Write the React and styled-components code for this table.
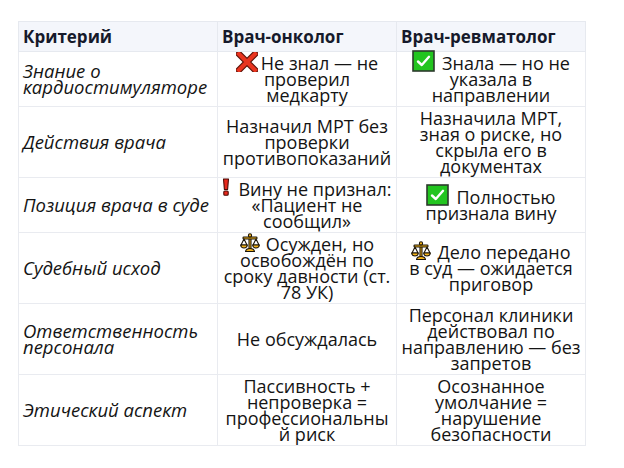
import React from 'react';
import styled, { createGlobalStyle } from 'styled-components';

const GlobalStyle = createGlobalStyle`
  html, body {
    margin: 0;
    background: #ffffff;
  }
  body {
    font-family: 'Open Sans', 'Noto Sans', 'Liberation Sans', sans-serif;
    color: #141414;
  }
`;

const Page = styled.div`
  padding: 21px 0 0 18px;
`;

const Table = styled.table`
  width: 567px;
  table-layout: fixed;
  border-collapse: collapse;
  font-size: 18px;
  line-height: 16px;
`;

const HeadCell = styled.th`
  background: #f4f6fb;
  border: 1px solid #e6e9ef;
  padding: 7px 4px 6px;
  text-align: left;
  font-size: 17px;
  font-weight: 700;
  color: #161a2b;
  white-space: nowrap;
`;

const LabelCell = styled.td`
  border: 1px solid #e9ebf0;
  padding: 3px 4px;
  vertical-align: middle;
  font-style: italic;
  font-size: 18.5px;
  text-align: left;
  white-space: nowrap;
`;

const ValueCell = styled.td`
  border: 1px solid #e9ebf0;
  padding: 3px 2px;
  vertical-align: middle;
  text-align: center;
  white-space: nowrap;
`;

const Icon = styled.svg`
  display: inline-block;
  vertical-align: top;
  margin: ${({ $up }) => `-${$up}px`} ${({ $gap }) => $gap}px -4px 0;
`;

const CrossIcon = () => (
  <Icon width="22" height="20" viewBox="0 0 22 20" $up={3} $gap={3}>
    <g strokeLinecap="square">
      <path d="M3 2 L19 18 M19 2 L3 18" stroke="#5a1208" strokeWidth="6.4" />
      <path d="M3 2 L19 18 M19 2 L3 18" stroke="#e8341f" strokeWidth="4.2" />
    </g>
  </Icon>
);

const CheckIcon = () => (
  <Icon width="23" height="22" viewBox="0 0 23 22" $up={5} $gap={7}>
    <rect x="1" y="1" width="21" height="20" fill="#22c51f" stroke="#2c3a2c" strokeWidth="1.6" />
    <path d="M6 11.5 L9.8 15 L17 6.8" fill="none" stroke="#ffffff" strokeWidth="2.4" strokeLinecap="round" strokeLinejoin="round" />
  </Icon>
);

const BangIcon = () => (
  <Icon width="8" height="18" viewBox="0 0 8 18" $up={3} $gap={8}>
    <path d="M1.5 1 H6.5 L5.6 11.5 H2.4 Z" fill="#e8281c" stroke="#4a0c06" strokeWidth="1.1" strokeLinejoin="round" />
    <rect x="1.8" y="13" width="4.4" height="4.2" rx="1" fill="#e8281c" stroke="#4a0c06" strokeWidth="1.1" />
  </Icon>
);

const ScalesIcon = () => (
  <Icon width="20" height="20" viewBox="0 0 20 20" $up={3} $gap={6}>
    <g stroke="#1b1408" strokeWidth="1.1" strokeLinejoin="round" fill="#f4b41a">
      <rect x="9" y="2.5" width="2" height="13" />
      <rect x="3" y="4" width="14" height="2" rx="0.8" />
      <circle cx="10" cy="2.4" r="1.6" />
      <path d="M4 6 L1 12 H7 Z" fill="none" />
      <path d="M16 6 L13 12 H19 Z" fill="none" />
      <path d="M0.6 12 H7.4 Q7 15 4 15 Q1 15 0.6 12 Z" />
      <path d="M12.6 12 H19.4 Q19 15 16 15 Q13 15 12.6 12 Z" />
      <path d="M5.5 18.5 Q6 15.5 10 15.5 Q14 15.5 14.5 18.5 Z" />
    </g>
  </Icon>
);

const icons = {
  cross: CrossIcon,
  check: CheckIcon,
  bang: BangIcon,
  scales: ScalesIcon,
};

const rows = [
  {
    label: ['Знание о', 'кардиостимуляторе'],
    onc: { icon: 'cross', lines: ['Не знал — не', 'проверил', 'медкарту'] },
    rev: { icon: 'check', lines: ['Знала — но не', 'указала в', 'направлении'] },
  },
  {
    label: ['Действия врача'],
    onc: { lines: ['Назначил МРТ без', 'проверки', 'противопоказаний'] },
    rev: { lines: ['Назначила МРТ,', 'зная о риске, но', 'скрыла его в', 'документах'] },
  },
  {
    label: ['Позиция врача в суде'],
    onc: { icon: 'bang', lines: ['Вину не признал:', '«Пациент не', 'сообщил»'] },
    rev: { icon: 'check', lines: ['Полностью', 'признала вину'] },
  },
  {
    label: ['Судебный исход'],
    onc: { icon: 'scales', lines: ['Осужден, но', 'освобождён по', 'сроку давности (ст.', '78 УК)'] },
    rev: { icon: 'scales', lines: ['Дело передано', 'в суд — ожидается', 'приговор'] },
  },
  {
    label: ['Ответственность', 'персонала'],
    onc: { lines: ['Не обсуждалась'] },
    rev: { lines: ['Персонал клиники', 'действовал по', 'направлению — без', 'запретов'] },
  },
  {
    label: ['Этический аспект'],
    onc: { lines: ['Пассивность +', 'непроверка =', 'профессиональны', 'й риск'] },
    rev: { lines: ['Осознанное', 'умолчание =', 'нарушение', 'безопасности'] },
  },
];

const Lines = ({ lines, icon }) => {
  const Mark = icon ? icons[icon] : null;
  return lines.map((line, i) => (
    <React.Fragment key={i}>
      {i > 0 && <br />}
      {i === 0 && Mark && <Mark />}
      {line}
    </React.Fragment>
  ));
};

export default function App() {
  return (
    <Page>
      <GlobalStyle />
      <Table>
        <colgroup>
          <col style={{ width: 199 }} />
          <col style={{ width: 179 }} />
          <col style={{ width: 189 }} />
        </colgroup>
        <thead>
          <tr>
            <HeadCell>Критерий</HeadCell>
            <HeadCell>Врач-онколог</HeadCell>
            <HeadCell>Врач-ревматолог</HeadCell>
          </tr>
        </thead>
        <tbody>
          {rows.map((row) => (
            <tr key={row.label.join(' ')}>
              <LabelCell>
                <Lines lines={row.label} />
              </LabelCell>
              <ValueCell>
                <Lines {...row.onc} />
              </ValueCell>
              <ValueCell>
                <Lines {...row.rev} />
              </ValueCell>
            </tr>
          ))}
        </tbody>
      </Table>
    </Page>
  );
}
